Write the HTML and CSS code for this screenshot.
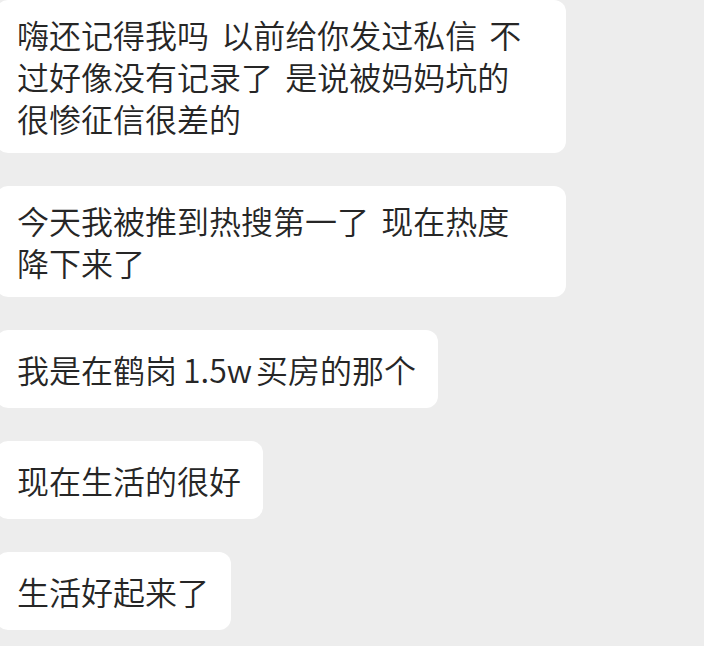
FILE: index.html
```html
<!DOCTYPE html>
<html lang="zh-CN">
<head>
  <meta charset="UTF-8" />
  <title>聊天记录</title>
  <meta name="viewport" content="width=device-width, initial-scale=1" />
  <link rel="stylesheet" href="styles.css">
</head>
<body>

  <div class="chat">
    <div class="bubble full">嗨还记得我吗 以前给你发过私信 不<br>过好像没有记录了 是说被妈妈坑的<br>很惨征信很差的</div>
    <div class="bubble full">今天我被推到热搜第一了 现在热度<br>降下来了</div>
    <div class="bubble">我是在鹤岗<span class="latin">1.5w</span>买房的那个</div>
    <div class="bubble">现在生活的很好</div>
    <div class="bubble">生活好起来了</div>
  </div>

</body>
</html>
```

FILE: styles.css
```css
* {
  box-sizing: border-box;
}
body {
  margin: 0;
  background: #ededed;
  font-family: "Noto Sans CJK SC", "Noto Sans", sans-serif;
}
.chat {
  display: flex;
  flex-direction: column;
  align-items: flex-start;
  gap: 33px;
}
.bubble {
  display: flex;
  align-items: center;
  min-height: 78px;
  max-width: 570px;
  margin-left: -4px;
  padding: 13px 22px 14px 21px;
  background: #fff;
  border-radius: 12px;
  color: #262626;
  font-size: 32px;
  font-weight: 350;
  line-height: 42px;
  word-spacing: 5px;
}
.bubble.full {
  width: 570px;
}
.latin {
  margin: 0 4px 0 6px;
}
```
